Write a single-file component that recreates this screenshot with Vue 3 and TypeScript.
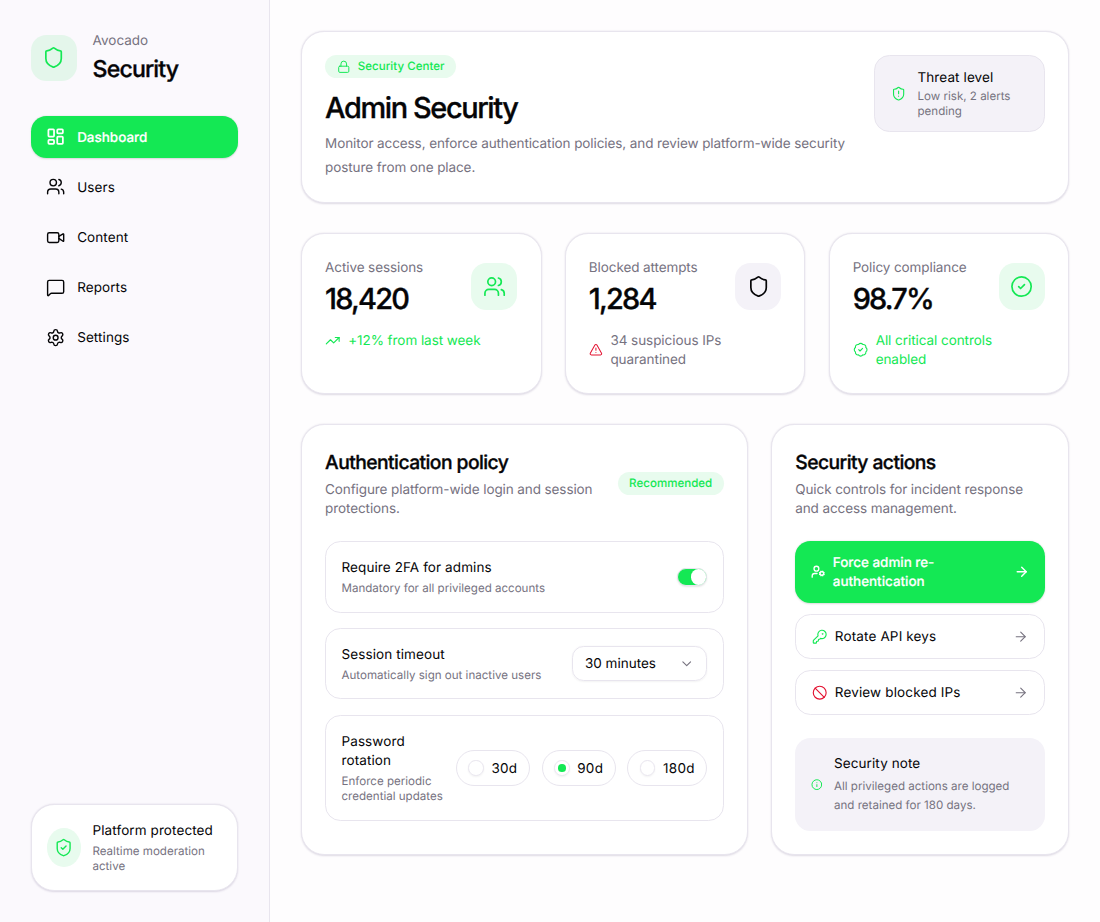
<template>
  <div class="layout">
    <aside class="sidebar">
      <div class="brand">
        <div class="tile brand-tile">
          <svg class="icon" viewBox="0 0 24 24" v-html="icons.shield"></svg>
        </div>
        <div>
          <p class="brand-name">Avocado</p>
          <p class="brand-title">Security</p>
        </div>
      </div>
      <nav class="nav">
        <button
          v-for="item in navItems"
          :key="item.label"
          class="nav-item"
          :class="{ active: item.label === activeNav }"
          @click="activeNav = item.label"
        >
          <svg class="icon icon-md" viewBox="0 0 24 24" v-html="icons[item.icon]"></svg>
          <span class="label">{{ item.label }}</span>
        </button>
      </nav>
      <div class="status-card">
        <div class="status-dot">
          <svg class="icon icon-md" viewBox="0 0 24 24" v-html="icons.shieldCheck"></svg>
        </div>
        <div>
          <p class="item-title">Platform protected</p>
          <p class="item-desc">Realtime moderation active</p>
        </div>
      </div>
    </aside>

    <main class="main">
      <header class="card header">
        <div class="header-text">
          <span class="badge">
            <svg class="icon icon-xs" viewBox="0 0 24 24" v-html="icons.lock"></svg>
            Security Center
          </span>
          <h1>Admin Security</h1>
          <p class="lead">
            Monitor access, enforce authentication policies, and review platform-wide security posture from one place.
          </p>
        </div>
        <div class="threat">
          <svg class="icon icon-md green" viewBox="0 0 24 24" v-html="icons.shieldAlert"></svg>
          <div>
            <p class="item-title">Threat level</p>
            <p class="item-desc">Low risk, 2 alerts pending</p>
          </div>
        </div>
      </header>

      <section class="stats">
        <div v-for="stat in stats" :key="stat.label" class="card">
          <div class="stat-top">
            <div>
              <p class="text">{{ stat.label }}</p>
              <p class="stat-value">{{ stat.value }}</p>
            </div>
            <div class="tile" :class="{ neutral: stat.neutral }">
              <svg class="icon" viewBox="0 0 24 24" v-html="icons[stat.icon]"></svg>
            </div>
          </div>
          <div class="stat-note" :class="{ neutral: stat.neutral }">
            <svg
              class="icon icon-sm"
              :class="{ red: stat.neutral }"
              viewBox="0 0 24 24"
              v-html="icons[stat.noteIcon]"
            ></svg>
            <span class="label">{{ stat.note }}</span>
          </div>
        </div>
      </section>

      <section class="panels">
        <div class="card">
          <div class="panel-head">
            <div>
              <h2>Authentication policy</h2>
              <p class="text">Configure platform-wide login and session protections.</p>
            </div>
            <span class="badge">Recommended</span>
          </div>
          <div class="rows">
            <div class="row">
              <div class="row-text">
                <p class="item-title">Require 2FA for admins</p>
                <p class="item-desc">Mandatory for all privileged accounts</p>
              </div>
              <button
                class="switch"
                :class="{ on: require2fa }"
                role="switch"
                :aria-checked="require2fa"
                @click="require2fa = !require2fa"
              >
                <span class="thumb"></span>
              </button>
            </div>
            <div class="row">
              <div class="row-text">
                <p class="item-title">Session timeout</p>
                <p class="item-desc">Automatically sign out inactive users</p>
              </div>
              <button class="select">
                <span class="label">30 minutes</span>
                <svg class="icon icon-sm" viewBox="0 0 24 24" v-html="icons.chevron"></svg>
              </button>
            </div>
            <div class="row">
              <div class="row-text">
                <p class="item-title">Password rotation</p>
                <p class="item-desc">Enforce periodic credential updates</p>
              </div>
              <div class="radios">
                <button
                  v-for="option in rotationOptions"
                  :key="option"
                  class="radio"
                  @click="rotation = option"
                >
                  <span class="radio-circle">
                    <span v-if="rotation === option" class="radio-dot"></span>
                  </span>
                  <span class="label">{{ option }}</span>
                </button>
              </div>
            </div>
          </div>
        </div>

        <div class="card">
          <div>
            <h2>Security actions</h2>
            <p class="text">Quick controls for incident response and access management.</p>
          </div>
          <div class="actions">
            <button
              v-for="action in actions"
              :key="action.label"
              class="action"
              :class="{ primary: action.primary }"
            >
              <span class="action-label">
                <svg
                  class="icon icon-sm"
                  :class="action.color"
                  viewBox="0 0 24 24"
                  v-html="icons[action.icon]"
                ></svg>
                <span class="label">{{ action.label }}</span>
              </span>
              <svg class="icon icon-sm arrow" viewBox="0 0 24 24" v-html="icons.arrow"></svg>
            </button>
          </div>
          <div class="note">
            <svg class="icon icon-md green" viewBox="0 0 24 24" v-html="icons.info"></svg>
            <div>
              <p class="item-title">Security note</p>
              <p class="item-desc note-desc">All privileged actions are logged and retained for 180 days.</p>
            </div>
          </div>
        </div>
      </section>
    </main>
  </div>
</template>

<script setup lang="ts">
import { ref } from 'vue'

interface Stat {
  label: string
  value: string
  icon: string
  note: string
  noteIcon: string
  neutral?: boolean
}

interface Action {
  label: string
  icon: string
  color?: string
  primary?: boolean
}

const shieldPath = '<path d="M20 13c0 5-3.5 7.5-7.66 8.95a1 1 0 0 1-.67-.01C7.5 20.5 4 18 4 13V6a1 1 0 0 1 1-1c2 0 4.5-1.2 6.24-2.72a1.17 1.17 0 0 1 1.52 0C14.51 3.81 17 5 19 5a1 1 0 0 1 1 1z"/>'

const icons: Record<string, string> = {
  shield: shieldPath,
  shieldCheck: shieldPath + '<path d="m9 12 2 2 4-4"/>',
  shieldAlert: shieldPath + '<path d="M12 8v4"/><path d="M12 16h.01"/>',
  dashboard: '<rect width="7" height="9" x="3" y="3" rx="1"/><rect width="7" height="5" x="14" y="3" rx="1"/><rect width="7" height="9" x="14" y="12" rx="1"/><rect width="7" height="5" x="3" y="16" rx="1"/>',
  users: '<path d="M16 21v-2a4 4 0 0 0-4-4H6a4 4 0 0 0-4 4v2"/><path d="M16 3.128a4 4 0 0 1 0 7.744"/><path d="M22 21v-2a4 4 0 0 0-3-3.87"/><circle cx="9" cy="7" r="4"/>',
  video: '<path d="m16 13 5.223 3.482a.5.5 0 0 0 .777-.416V7.87a.5.5 0 0 0-.752-.432L16 10.5"/><rect x="2" y="6" width="14" height="12" rx="2"/>',
  message: '<path d="M22 17a2 2 0 0 1-2 2H6.828a2 2 0 0 0-1.414.586l-2.202 2.202A.71.71 0 0 1 2 21.286V5a2 2 0 0 1 2-2h16a2 2 0 0 1 2 2z"/>',
  settings: '<path d="M9.671 4.136a2.34 2.34 0 0 1 4.659 0 2.34 2.34 0 0 0 3.319 1.915 2.34 2.34 0 0 1 2.33 4.033 2.34 2.34 0 0 0 0 3.831 2.34 2.34 0 0 1-2.33 4.033 2.34 2.34 0 0 0-3.319 1.915 2.34 2.34 0 0 1-4.659 0 2.34 2.34 0 0 0-3.32-1.915 2.34 2.34 0 0 1-2.33-4.033 2.34 2.34 0 0 0 0-3.831A2.34 2.34 0 0 1 6.35 6.051a2.34 2.34 0 0 0 3.319-1.915"/><circle cx="12" cy="12" r="3"/>',
  lock: '<rect width="18" height="11" x="3" y="11" rx="2"/><path d="M7 11V7a5 5 0 0 1 10 0v4"/>',
  trend: '<path d="M16 7h6v6"/><path d="m22 7-8.5 8.5-5-5L2 17"/>',
  alert: '<path d="m21.73 18-8-14a2 2 0 0 0-3.48 0l-8 14A2 2 0 0 0 4 21h16a2 2 0 0 0 1.73-3"/><path d="M12 9v4"/><path d="M12 17h.01"/>',
  circleCheck: '<circle cx="12" cy="12" r="10"/><path d="m9 12 2 2 4-4"/>',
  badgeCheck: '<path d="M3.85 8.62a4 4 0 0 1 4.78-4.77 4 4 0 0 1 6.74 0 4 4 0 0 1 4.78 4.78 4 4 0 0 1 0 6.74 4 4 0 0 1-4.77 4.78 4 4 0 0 1-6.75 0 4 4 0 0 1-4.78-4.77 4 4 0 0 1 0-6.76Z"/><path d="m9 12 2 2 4-4"/>',
  chevron: '<path d="m6 9 6 6 6-6"/>',
  userCog: '<path d="M10 15H6a4 4 0 0 0-4 4v2"/><circle cx="9" cy="7" r="4"/><circle cx="18" cy="15" r="3"/><path d="m14.305 16.53.923-.382"/><path d="m15.228 13.852-.923-.383"/><path d="m16.852 12.228-.383-.923"/><path d="m16.852 17.772-.383.924"/><path d="m19.148 12.228.383-.923"/><path d="m19.53 18.696-.382-.924"/><path d="m20.772 13.852.924-.383"/><path d="m20.772 16.148.924.383"/>',
  key: '<path d="M2.586 17.414A2 2 0 0 0 2 18.828V21a1 1 0 0 0 1 1h3a1 1 0 0 0 1-1v-1a1 1 0 0 1 1-1h1a1 1 0 0 0 1-1v-1a1 1 0 0 1 1-1h.172a2 2 0 0 0 1.414-.586l.814-.814a6.5 6.5 0 1 0-4-4z"/><circle cx="16.5" cy="7.5" r=".5"/>',
  ban: '<circle cx="12" cy="12" r="10"/><path d="m4.9 4.9 14.2 14.2"/>',
  arrow: '<path d="M5 12h14"/><path d="m12 5 7 7-7 7"/>',
  info: '<circle cx="12" cy="12" r="10"/><path d="M12 16v-4"/><path d="M12 8h.01"/>'
}

const navItems = [
  { label: 'Dashboard', icon: 'dashboard' },
  { label: 'Users', icon: 'users' },
  { label: 'Content', icon: 'video' },
  { label: 'Reports', icon: 'message' },
  { label: 'Settings', icon: 'settings' }
]

const stats: Stat[] = [
  { label: 'Active sessions', value: '18,420', icon: 'users', note: '+12% from last week', noteIcon: 'trend' },
  { label: 'Blocked attempts', value: '1,284', icon: 'shield', note: '34 suspicious IPs quarantined', noteIcon: 'alert', neutral: true },
  { label: 'Policy compliance', value: '98.7%', icon: 'circleCheck', note: 'All critical controls enabled', noteIcon: 'badgeCheck' }
]

const actions: Action[] = [
  { label: 'Force admin re-authentication', icon: 'userCog', primary: true },
  { label: 'Rotate API keys', icon: 'key', color: 'green' },
  { label: 'Review blocked IPs', icon: 'ban', color: 'red' }
]

const rotationOptions = ['30d', '90d', '180d']

const activeNav = ref('Dashboard')
const require2fa = ref(true)
const rotation = ref('90d')
</script>

<style>
body {
  margin: 0;
  background: #fefdfe;
}
</style>

<style scoped>
.layout {
  --green: #14e854;
  --green-soft: #e8fbee;
  --red: #e3102f;
  --border: #e8e5ee;
  --muted: #76727f;
  --muted-bg: #f4f2f8;
  zoom: 0.9646;
  display: flex;
  height: calc(100vh / 0.9646);
  overflow: hidden;
  font-family: Inter, "Liberation Sans", sans-serif;
  font-size: 14px;
  line-height: 20px;
  text-rendering: geometricPrecision;
  color: #050507;
}

* {
  box-sizing: border-box;
}

p,
h1,
h2 {
  margin: 0;
}

button {
  font: inherit;
  letter-spacing: inherit;
  text-rendering: inherit;
  color: inherit;
  text-align: left;
  background: none;
  border: none;
  padding: 0;
  cursor: pointer;
}

.icon {
  display: block;
  width: 24px;
  height: 24px;
  fill: none;
  stroke: currentColor;
  stroke-width: 1.75;
  stroke-linecap: round;
  stroke-linejoin: round;
}

.icon-md {
  width: 20px;
  height: 20px;
}

.icon-sm {
  width: 16px;
  height: 16px;
}

.icon-xs {
  width: 14px;
  height: 14px;
}

.green {
  color: var(--green);
}

.red {
  color: var(--red);
}

/* Inter sits a little high in a 20px line */
.text,
.label,
.lead,
.brand-name,
.item-title {
  padding-top: 1.4px;
  margin-bottom: -1.4px;
}

.text,
.lead {
  color: var(--muted);
  letter-spacing: -0.1px;
}

/* headings: between medium and semibold */
h1,
h2,
.stat-value,
.brand-title {
  font-weight: 500;
  -webkit-text-stroke: 0.35px currentColor;
}

/* sidebar */
.sidebar {
  width: 280px;
  flex-shrink: 0;
  display: flex;
  flex-direction: column;
  padding: 32px;
  background: #fbf9fd;
  border-right: 1px solid var(--border);
}

.brand {
  display: flex;
  align-items: center;
  gap: 16px;
  margin-bottom: 32px;
}

.tile {
  flex-shrink: 0;
  display: flex;
  align-items: center;
  justify-content: center;
  width: 48px;
  height: 48px;
  border-radius: 16px;
  background: var(--green-soft);
  color: var(--green);
}

.tile.neutral {
  background: var(--muted-bg);
  color: #050507;
}

.brand-tile {
  background: #e4f6eb;
}

.brand-name {
  color: var(--muted);
}

.brand-title {
  margin-top: 4px;
  font-size: 24px;
  line-height: 32px;
  letter-spacing: -0.037em;
}

.nav {
  display: flex;
  flex-direction: column;
  gap: 8px;
}

.nav-item {
  display: flex;
  align-items: center;
  gap: 12px;
  padding: 12px 16px;
  border-radius: 16px;
  letter-spacing: 0.1px;
}

.nav-item.active {
  background: var(--green);
  color: #fff;
  font-weight: 500;
  letter-spacing: -0.02px;
  -webkit-text-stroke: 0.2px currentColor;
  box-shadow: 0 1px 2px rgba(0, 0, 0, 0.15);
}

.nav-item.active .icon {
  stroke-width: 2.2;
}

.status-card {
  display: flex;
  align-items: center;
  gap: 12px;
  margin-top: auto;
  padding: 16px;
  background: #fff;
  border: 1px solid var(--border);
  border-radius: 24px;
  box-shadow: 0 1px 2px rgba(40, 20, 80, 0.15);
}

.status-dot {
  display: flex;
  align-items: center;
  justify-content: center;
  width: 40px;
  height: 40px;
  border-radius: 50%;
  background: var(--green-soft);
  color: var(--green);
}

.item-title {
  letter-spacing: 0.1px;
}

.item-desc {
  margin-top: 4px;
  font-size: 12px;
  line-height: 16px;
  color: var(--muted);
}

/* main */
.main {
  flex: 1;
  min-width: 0;
  display: flex;
  flex-direction: column;
  gap: 32px;
  padding: 32px;
}

.card {
  padding: 24px;
  background: #fff;
  border: 1px solid var(--border);
  border-radius: 24px;
  box-shadow: 0 1px 2px rgba(40, 20, 80, 0.15);
}

.header {
  display: flex;
  align-items: flex-start;
  gap: 24px;
}

.header-text {
  flex: 1;
}

.badge {
  display: inline-flex;
  align-items: center;
  gap: 8px;
  padding: 4px 12px;
  border-radius: 999px;
  background: var(--green-soft);
  color: var(--green);
  font-size: 12px;
  line-height: 16px;
  font-weight: 500;
  vertical-align: top;
}

h1 {
  margin-top: 12px;
  padding-top: 1px;
  font-size: 30px;
  line-height: 36px;
  letter-spacing: -0.048em;
}

.lead {
  margin-top: 7px;
  line-height: 24px;
}

.threat {
  display: flex;
  align-items: center;
  gap: 12px;
  width: 177px;
  flex-shrink: 0;
  padding: 12px 16px;
  background: var(--muted-bg);
  border: 1px solid var(--border);
  border-radius: 16px;
}

.threat .item-desc {
  margin-top: 2px;
}

.stats {
  display: grid;
  grid-template-columns: repeat(3, 1fr);
  gap: 24px;
}

.stat-top {
  display: flex;
  align-items: center;
  justify-content: space-between;
}

.stat-value {
  margin-top: 4px;
  padding-top: 1px;
  margin-bottom: -1px;
  font-size: 30px;
  line-height: 36px;
  letter-spacing: -0.062em;
}

.stat-note {
  display: flex;
  align-items: center;
  gap: 8px;
  margin-top: 16px;
  color: var(--green);
  letter-spacing: -0.06px;
}

.stat-note.neutral {
  color: var(--muted);
}

.panels {
  display: grid;
  grid-template-columns: 3fr 2fr;
  gap: 24px;
}

.panel-head {
  display: flex;
  align-items: center;
  justify-content: space-between;
  gap: 24px;
}

h2 {
  margin-bottom: 4px;
  font-size: 20px;
  line-height: 28px;
  letter-spacing: -0.029em;
}

.rows {
  display: flex;
  flex-direction: column;
  gap: 16px;
  margin-top: 24px;
}

.row {
  display: flex;
  align-items: center;
  gap: 12px;
  padding: 16px;
  border: 1px solid var(--border);
  border-radius: 16px;
}

.row-text {
  flex: 1;
  min-width: 0;
}

.switch {
  display: flex;
  align-items: center;
  width: 32px;
  height: 18px;
  border: 1px solid var(--border);
  border-radius: 999px;
  background: #e4e4e7;
  box-shadow: 0 1px 2px rgba(0, 0, 0, 0.1);
}

.switch.on {
  justify-content: flex-end;
  background: var(--green);
}

.thumb {
  width: 16px;
  height: 16px;
  border-radius: 50%;
  background: #fff;
}

.select {
  display: flex;
  align-items: center;
  justify-content: space-between;
  width: 140px;
  height: 36px;
  padding: 0 12px;
  border: 1px solid var(--border);
  border-radius: 12px;
  box-shadow: 0 1px 2px rgba(0, 0, 0, 0.05);
}

.select .icon {
  color: var(--muted);
}

.radios {
  display: flex;
  gap: 12px;
}

.radio {
  display: flex;
  align-items: center;
  gap: 8px;
  padding: 8px 12px;
  border: 1px solid var(--border);
  border-radius: 999px;
  letter-spacing: 0.3px;
}

.radio-circle {
  display: flex;
  align-items: center;
  justify-content: center;
  width: 16px;
  height: 16px;
  border: 1px solid var(--border);
  border-radius: 50%;
  box-shadow: 0 1px 2px rgba(0, 0, 0, 0.05);
}

.radio-dot {
  width: 8px;
  height: 8px;
  border-radius: 50%;
  background: var(--green);
}

.actions {
  display: flex;
  flex-direction: column;
  gap: 12px;
  margin: 24px 0;
}

.action {
  display: flex;
  align-items: center;
  justify-content: space-between;
  padding: 12px 16px;
  border: 1px solid var(--border);
  border-radius: 16px;
  letter-spacing: 0.15px;
}

.action.primary {
  border: none;
  background: var(--green);
  color: #fff;
  font-weight: 500;
  letter-spacing: -0.05px;
  -webkit-text-stroke: 0.2px currentColor;
  box-shadow: 0 1px 2px rgba(0, 0, 0, 0.15);
}

.action.primary .icon {
  stroke-width: 2.2;
}

.action-label {
  display: flex;
  align-items: center;
  gap: 8px;
}

.arrow {
  flex-shrink: 0;
  color: var(--muted);
}

.primary .arrow {
  color: #fff;
}

.note {
  display: flex;
  align-items: center;
  gap: 12px;
  padding: 16px;
  border-radius: 16px;
  background: var(--muted-bg);
}

.note .icon {
  stroke-width: 2;
}

.note-desc {
  line-height: 20px;
}
</style>
